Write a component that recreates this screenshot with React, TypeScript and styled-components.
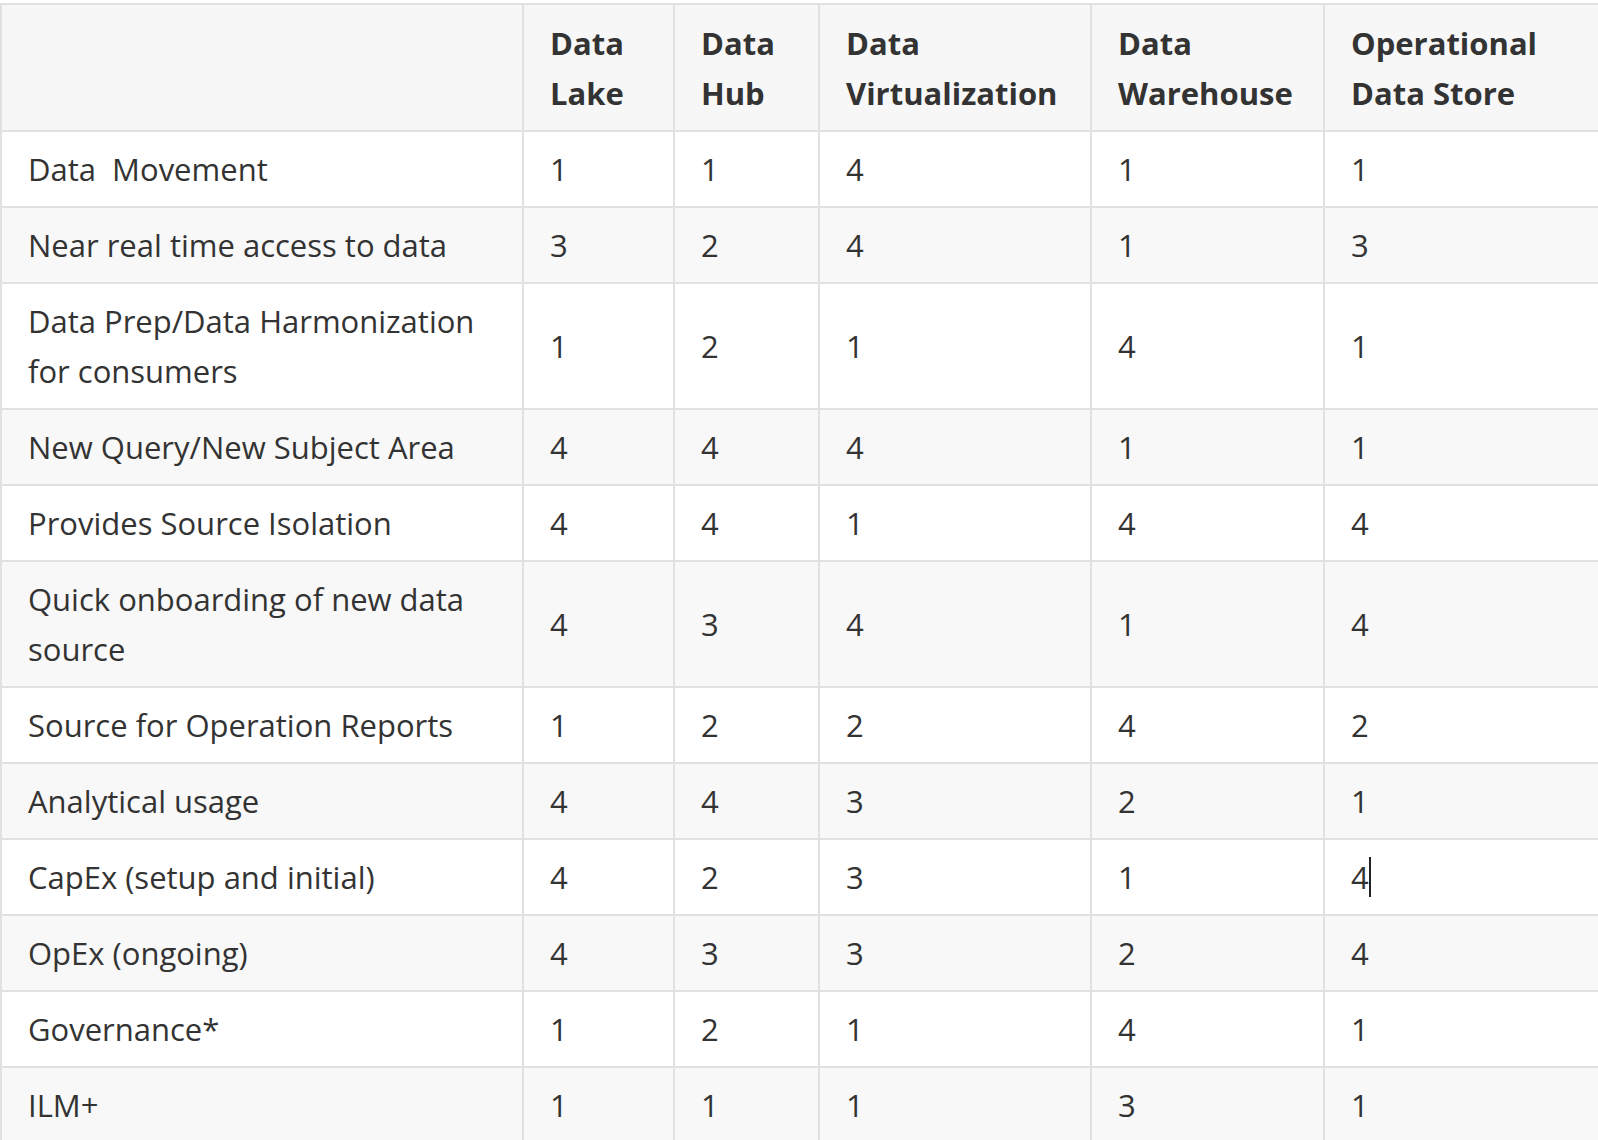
import styled, { createGlobalStyle } from "styled-components";

const Global = createGlobalStyle`
  html, body { margin: 0; padding: 0; background: #fff; }
  body { font-family: "Open Sans", "Noto Sans", sans-serif; color: #333; }
`;

const Wrap = styled.div`
  padding-top: 3px;
  width: 1598px;
  overflow: hidden;
`;

const Table = styled.table`
  width: 1598px;
  border-collapse: collapse;
  table-layout: fixed;
  font-size: 31px;
  line-height: 50px;
`;

const Th = styled.th`
  background: #f7f7f7;
  border: 2px solid #e1e1e1;
  padding: 13px 26px 12px;
  text-align: left;
  vertical-align: top;
  font-weight: 700;
  color: #333;
`;

const Tr = styled.tr<{ $odd: boolean }>`
  background: ${(p) => (p.$odd ? "#f8f8f8" : "#fff")};
`;

const Td = styled.td`
  border: 2px solid #e1e1e1;
  padding: 12px 26px;
  vertical-align: middle;
  color: #333;
`;

const Caret = styled.span`
  display: inline-block;
  width: 2px;
  height: 40px;
  background: #222;
  vertical-align: -8px;
`;

const widths = [522, 151, 145, 272, 233, 275];
const headers = ["", "Data Lake", "Data Hub", "Data Virtualization", "Data Warehouse", "Operational Data Store"];

const rows: [string, number[]][] = [
  ["Data\u00a0 Movement", [1, 1, 4, 1, 1]],
  ["Near real time access to data", [3, 2, 4, 1, 3]],
  ["Data Prep/Data Harmonization for consumers", [1, 2, 1, 4, 1]],
  ["New Query/New Subject Area", [4, 4, 4, 1, 1]],
  ["Provides Source Isolation", [4, 4, 1, 4, 4]],
  ["Quick onboarding of new data source", [4, 3, 4, 1, 4]],
  ["Source for Operation Reports", [1, 2, 2, 4, 2]],
  ["Analytical usage", [4, 4, 3, 2, 1]],
  ["CapEx (setup and initial)", [4, 2, 3, 1, 4]],
  ["OpEx (ongoing)", [4, 3, 3, 2, 4]],
  ["Governance*", [1, 2, 1, 4, 1]],
  ["ILM+", [1, 1, 1, 3, 1]],
];

export default function App() {
  return (
    <Wrap>
      <Global />
      <Table>
        <colgroup>
          {widths.map((w, i) => (
            <col key={i} style={{ width: w }} />
          ))}
        </colgroup>
        <thead>
          <tr>
            {headers.map((h, i) => (
              <Th key={i}>{h}</Th>
            ))}
          </tr>
        </thead>
        <tbody>
          {rows.map(([label, vals], r) => (
            <Tr key={r} $odd={r % 2 === 1}>
              <Td>{label}</Td>
              {vals.map((v, c) => (
                <Td key={c}>
                  {v}
                  {r === 8 && c === 4 && <Caret />}
                </Td>
              ))}
            </Tr>
          ))}
        </tbody>
      </Table>
    </Wrap>
  );
}
